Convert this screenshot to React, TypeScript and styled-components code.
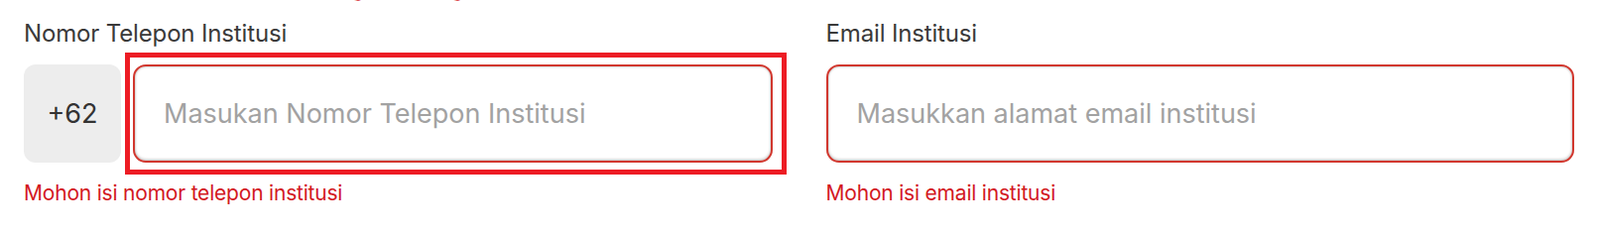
import React from "react";
import styled, { createGlobalStyle } from "styled-components";

const GlobalStyle = createGlobalStyle`
  html, body {
    margin: 0;
    padding: 0;
    background: #ffffff;
    overflow: hidden;
  }
  body {
    font-family: Inter, "Noto Sans", "Liberation Sans", sans-serif;
  }
  * { box-sizing: border-box; }
`;

const Page = styled.div`
  width: 1613px;
  height: 219px;
  overflow: hidden;
  padding: 0 26px 0 24px;
`;

const PrevError = styled.div`
  margin-top: -23px;
  height: 24px;
  font-size: 21px;
  line-height: 24px;
  color: #d3191f;
  white-space: nowrap;
  letter-spacing: -0.2px;
`;

const Grid = styled.div`
  display: grid;
  grid-template-columns: 1fr 1fr;
  column-gap: 54px;
  padding-top: 2px;
`;

const Field = styled.div`
  display: flex;
  flex-direction: column;
`;

const Label = styled.label`
  font-size: 24px;
  line-height: 29px;
  height: 29px;
  color: #3a3a3a;
  margin-top: 16px;
  letter-spacing: -0.15px;
`;

const Row = styled.div`
  display: flex;
  gap: 12px;
  margin-top: 17px;
`;

const Prefix = styled.div`
  width: 98px;
  height: 99px;
  flex: none;
  border-radius: 12px;
  background: #ededed;
  display: flex;
  align-items: center;
  justify-content: center;
  font-size: 27px;
  color: #333333;
`;

const InputWrap = styled.div`
  position: relative;
  flex: 1;
  display: flex;
`;

const Input = styled.input`
  flex: 1;
  width: 100%;
  height: 99px;
  border: 2px solid #d1372e;
  border-radius: 13px;
  background: #ffffff;
  box-shadow: inset 0 -1px 3px rgba(0, 0, 0, 0.28), inset 0 1px 2px rgba(0, 0, 0, 0.12);
  padding: 0 29px;
  font-family: inherit;
  font-size: 27px;
  color: #333333;
  outline: none;
  &::placeholder {
    color: #a2a2a2;
  }
`;

const Highlight = styled.div`
  position: absolute;
  left: -8px;
  right: -14px;
  top: -12px;
  bottom: -12px;
  border: 5px solid #ed1c24;
  pointer-events: none;
`;

const ErrorText = styled.div`
  font-size: 21px;
  line-height: 25px;
  color: #d3191f;
  margin-top: 18px;
  letter-spacing: -0.2px;
`;

export default function App() {
  return (
    <>
      <GlobalStyle />
      <Page>
        <PrevError>Mohon isi nama kota institusi petugas lembaga</PrevError>
        <Grid>
          <Field>
            <Label>Nomor Telepon Institusi</Label>
            <Row>
              <Prefix>+62</Prefix>
              <InputWrap>
                <Input type="tel" placeholder="Masukan Nomor Telepon Institusi" />
                <Highlight />
              </InputWrap>
            </Row>
            <ErrorText>Mohon isi nomor telepon institusi</ErrorText>
          </Field>
          <Field>
            <Label>Email Institusi</Label>
            <Row>
              <InputWrap>
                <Input type="email" placeholder="Masukkan alamat email institusi" />
              </InputWrap>
            </Row>
            <ErrorText>Mohon isi email institusi</ErrorText>
          </Field>
        </Grid>
      </Page>
    </>
  );
}
